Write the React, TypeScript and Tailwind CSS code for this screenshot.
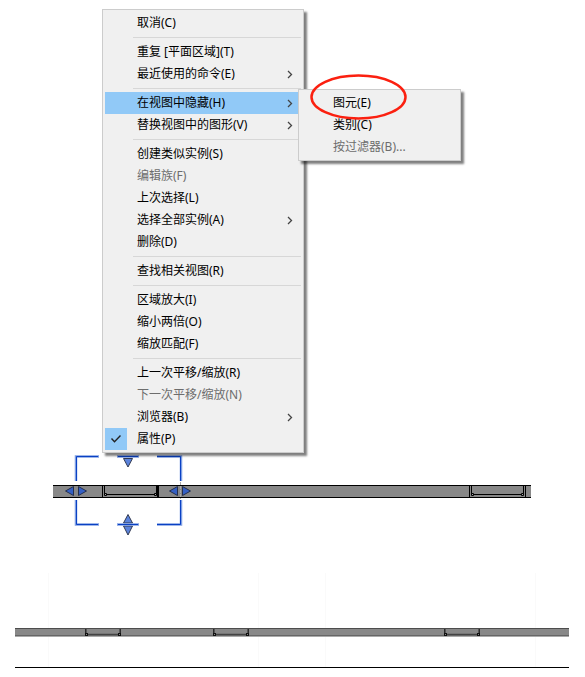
import React from 'react';
import clsx from 'clsx';

type Item = {
  label: string;
  disabled?: boolean;
  submenu?: boolean;
  active?: boolean;
  checked?: boolean;
};

const groups: Item[][] = [
  [{ label: '取消(C)' }],
  [{ label: '重复 [平面区域](T)' }, { label: '最近使用的命令(E)', submenu: true }],
  [
    { label: '在视图中隐藏(H)', submenu: true, active: true },
    { label: '替换视图中的图形(V)', submenu: true },
  ],
  [
    { label: '创建类似实例(S)' },
    { label: '编辑族(F)', disabled: true },
    { label: '上次选择(L)' },
    { label: '选择全部实例(A)', submenu: true },
    { label: '删除(D)' },
  ],
  [{ label: '查找相关视图(R)' }],
  [{ label: '区域放大(I)' }, { label: '缩小两倍(O)' }, { label: '缩放匹配(F)' }],
  [
    { label: '上一次平移/缩放(R)' },
    { label: '下一次平移/缩放(N)', disabled: true },
    { label: '浏览器(B)', submenu: true },
    { label: '属性(P)', checked: true },
  ],
];

const hideOptions: Item[] = [
  { label: '图元(E)' },
  { label: '类别(C)' },
  { label: '按过滤器(B)...', disabled: true },
];

const menuBox =
  'border border-[#cccccc] bg-[#f0f0f0] p-[2px] shadow-[3px_3px_2px_rgba(0,0,0,0.5)]';

const MenuItem: React.FC<{ item: Item }> = ({ item }) => (
  <button
    type="button"
    role={item.checked ? 'menuitemcheckbox' : 'menuitem'}
    aria-checked={item.checked}
    aria-haspopup={item.submenu ? 'menu' : undefined}
    disabled={item.disabled}
    className={clsx(
      'flex h-[22px] w-full items-center text-left text-xs whitespace-nowrap',
      item.disabled ? 'text-[#6d6d6d]' : 'text-black',
      item.active && 'bg-[#91c9f7]'
    )}
  >
    <span
      className={clsx(
        'mr-[10px] flex size-[22px] shrink-0 items-center justify-center',
        item.checked && 'bg-[#91c9f7]'
      )}
    >
      {item.checked && (
        <svg width="12" height="10" viewBox="0 0 12 10" fill="none" stroke="#222" strokeWidth="1.4">
          <path d="M1.5 4.5 4.5 7.7 10.5 1.5" />
        </svg>
      )}
    </span>
    <span className="grow">{item.label}</span>
    {item.submenu && (
      <svg className="mr-2" width="6" height="10" viewBox="0 0 6 10" fill="none" stroke="#444" strokeWidth="1.3">
        <path d="M1 2 4.500 5.500 1 9" />
      </svg>
    )}
  </button>
);

// Plan symbol of a window in the upper wall
const WallWindow: React.FC<{ x: number; width: number }> = ({ x, width }) => (
  <g transform={`translate(${x} 485)`}>
    <path d={`M.5 0V12M2.5 0V9M${width - 2.5} 0V9M${width - 0.5} 0V12M5 9.5H${width - 4}`} stroke="#000" />
    <path d={`M2.5 8.5h2v2h-2zM${width - 4.5} 8.5h2v2h-2z`} fill="#aaa" stroke="#000" />
  </g>
);

const LowerWindow: React.FC<{ x: number }> = ({ x }) => (
  <g transform={`translate(${x} 628)`}>
    <path d="M0 1h1v7H0zM35 1h1v7h-1z" fill="#2b2b2b" />
    <path d="M1 1h1v7H1zM34 1h1v7h-1z" fill="#555" />
    <path d="M3 5h30v1H3z" fill="#777" />
    <path d="M3 6h30v1H3z" fill="#444" />
    <path d="M0 5h3v3H0zM33 5h3v3h-3z" fill="#111" />
    <path d="M1 6h1v1H1zM34 6h1v1h-1z" fill="#888" />
  </g>
);

const FlipArrows: React.FC<{ x: number }> = ({ x }) => (
  <g transform={`translate(${x} 491)`} fill="#3560c4" stroke="#252f4c" strokeWidth="1">
    <path d="M-2.500 -4.500V4.500L-10.500 0zM2.500 -4.500V4.500L10.500 0z" />
  </g>
);

const corners =
  'M98 456.500H76.500V481M157 456.500H180.500V481M76.500 500V524.500H98M180.500 500V524.500H157M118 456.500H138M118 524.500H138';

const cornersGlow =
  'M99 456.500H76V481M157 456.500H181V481M76 500V524.500H99M181 500V524.500H157M117 456.500H139M117 524.500H139';

const Drawing: React.FC = () => (
  <svg className="block h-[677px] w-full" role="img" aria-label="平面图">
    <path d="M53 485H531V498H53z" fill="#888" />
    <path d="M53 485.500H531M53 497.500H531" stroke="#000" />
    <WallWindow x={102} width={57} />
    <path d="M157.500 485V497" stroke="#000" />
    <WallWindow x={469} width={57} />

    <path
      d="M123.500 458.500H132.500L128 467zM123.500 523H132.500L128 514.500zM123.500 526H132.500L128 535z"
      fill="#5b83dc"
      stroke="#333b52"
    />
    <path d={cornersGlow} fill="none" stroke="#7f9fe3" strokeWidth="2.500" />
    <path d={corners} fill="none" stroke="#0a41c4" />
    <FlipArrows x={76} />
    <FlipArrows x={180} />
    <path d="M180.500 482V499" stroke="#aaa" strokeDasharray="3 1" />

    <path
      d="M48.500 573V667M258.500 573V667M325.500 573V667M535.500 573V667"
      stroke="#fafafa"
    />
    <path d="M15 628H569V637H15z" fill="#888" />
    <path d="M15 628.500H569" stroke="#4d4d4d" />
    <path d="M15 635.500H569" stroke="#666" />
    <path d="M15 636.500H569" stroke="#aaa" />
    <LowerWindow x={85} />
    <LowerWindow x={213} />
    <LowerWindow x={444} />
    <path d="M15 667.500H569" stroke="#000" />
  </svg>
);

export default function App() {
  return (
    <main className="relative min-h-screen bg-white font-['Noto_Sans','Noto_Sans_CJK_SC',sans-serif]">
      <Drawing />

      {/* Context menu */}
      <div role="menu" className={clsx('absolute top-[9px] left-[102px] w-[202px]', menuBox)}>
        {groups.map((group, i) => (
          <React.Fragment key={i}>
            {i > 0 && <hr className="my-[3px] ml-7 border-[#d7d7d7]" />}
            {group.map((item) => (
              <MenuItem key={item.label} item={item} />
            ))}
          </React.Fragment>
        ))}
      </div>

      {/* Submenu */}
      <div role="menu" className={clsx('absolute top-[89px] left-[298px] w-[163px]', menuBox)}>
        {hideOptions.map((item) => (
          <MenuItem key={item.label} item={item} />
        ))}
      </div>

      <svg
        className="pointer-events-none absolute top-[73px] left-[309px]"
        width="100"
        height="48"
        fill="none"
        stroke="#fb2010"
        strokeWidth="2.500"
      >
        <ellipse cx="49.500" cy="24" rx="47" ry="21.500" />
      </svg>
    </main>
  );
}
